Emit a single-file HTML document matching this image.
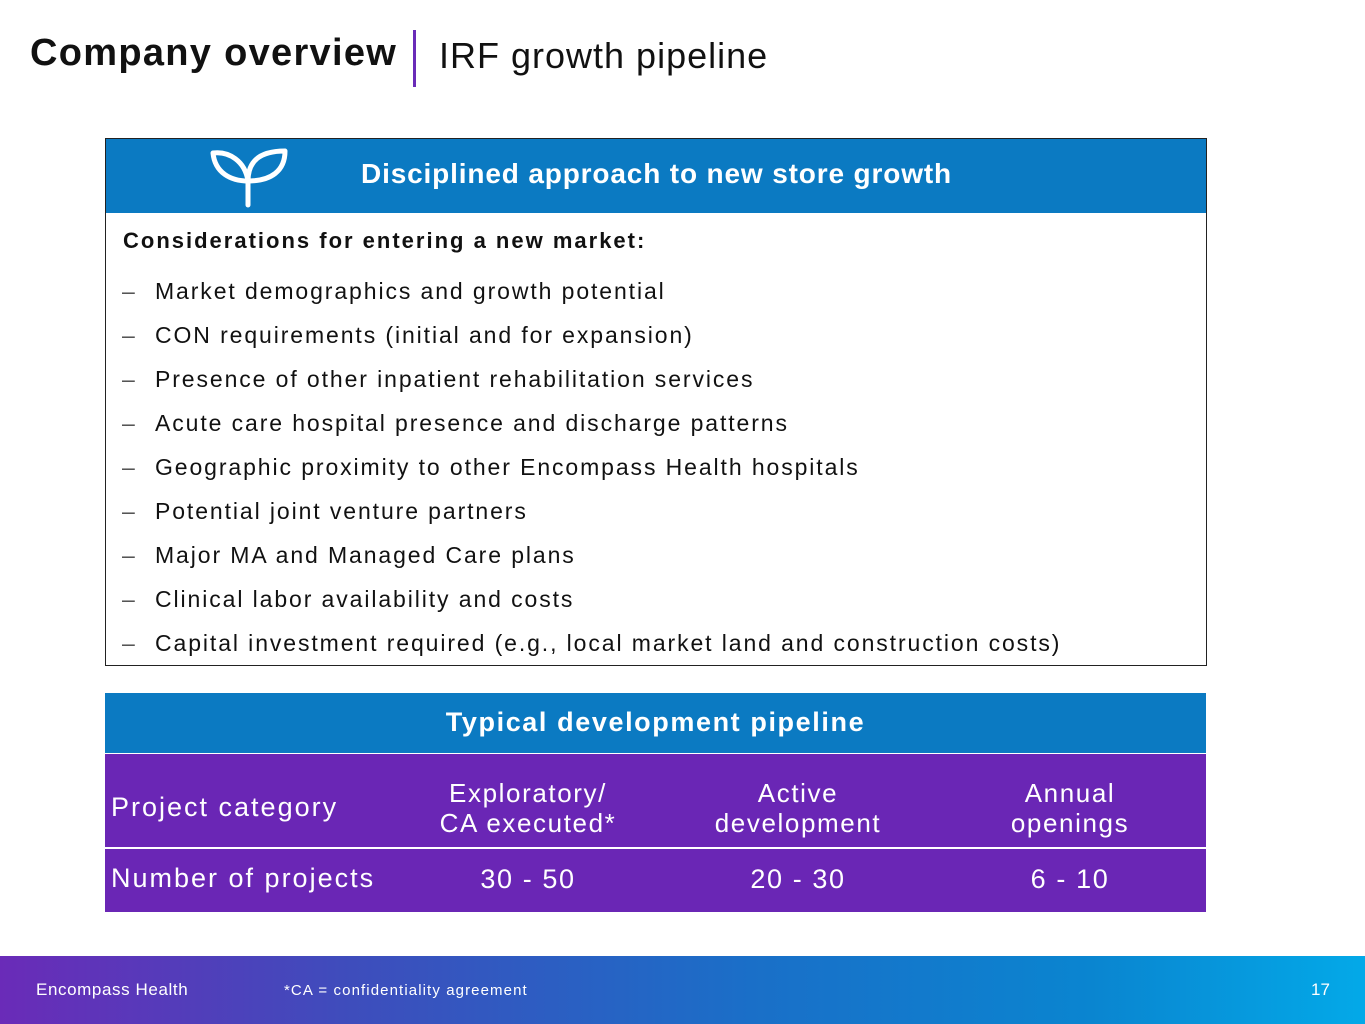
<!DOCTYPE html>
<html><head><meta charset="utf-8"><style>
body{margin:0;width:1365px;height:1024px;position:relative;background:#fff;font-family:"Liberation Sans",sans-serif;overflow:hidden}
.a{position:absolute;white-space:nowrap}
.li{position:absolute;left:122px;font-size:23px;color:#111;white-space:nowrap;letter-spacing:1.9px}
.li span{display:inline-block;width:33px;color:#555;letter-spacing:0}
.c{position:absolute;text-align:center;color:#fff;font-size:26px;line-height:30px;letter-spacing:1.6px}
</style></head><body>
<div class="a" style="left:30px;top:32px;font-size:38px;font-weight:bold;color:#111;letter-spacing:1.3px">Company overview</div>
<div class="a" style="left:413px;top:30px;width:3px;height:57px;background:#6a2bb8"></div>
<div class="a" style="left:439px;top:35px;font-size:36px;color:#111;letter-spacing:1px">IRF growth pipeline</div>

<div class="a" style="left:105px;top:138px;width:1100px;height:526px;border:1.5px solid #222"></div>
<div class="a" style="left:106px;top:139px;width:1100px;height:74px;background:#0b7ac2"></div>
<svg class="a" style="left:205px;top:143px" width="90" height="68" viewBox="0 0 90 68">
<g fill="none" stroke="#fff" stroke-width="5" stroke-linecap="round" stroke-linejoin="round">
<path d="M43 62 V38"/>
<path d="M8 10 C24 8 40 18 43 38 C26 38 10 30 8 10"/>
<path d="M43 38 C43 18 55 8 80 8 C80 28 66 38 43 38"/>
</g></svg>
<div class="a" style="left:361px;top:158px;font-size:28px;font-weight:bold;color:#fff;letter-spacing:0.85px">Disciplined approach to new store growth</div>
<div class="a" style="left:123px;top:228px;font-size:22px;font-weight:bold;color:#111;letter-spacing:2px">Considerations for entering a new market:</div>
<div class="li" style="top:278px"><span>–</span>Market demographics and growth potential</div>
<div class="li" style="top:322px"><span>–</span>CON requirements (initial and for expansion)</div>
<div class="li" style="top:366px"><span>–</span>Presence of other inpatient rehabilitation services</div>
<div class="li" style="top:410px"><span>–</span>Acute care hospital presence and discharge patterns</div>
<div class="li" style="top:454px"><span>–</span>Geographic proximity to other Encompass Health hospitals</div>
<div class="li" style="top:498px"><span>–</span>Potential joint venture partners</div>
<div class="li" style="top:542px"><span>–</span>Major MA and Managed Care plans</div>
<div class="li" style="top:586px"><span>–</span>Clinical labor availability and costs</div>
<div class="li" style="top:630px"><span>–</span>Capital investment required (e.g., local market land and construction costs)</div>

<div class="a" style="left:105px;top:693px;width:1101px;height:60px;background:#0b7ac2"></div>
<div class="c" style="left:105px;top:707px;width:1101px;font-weight:bold;font-size:27px">Typical development pipeline</div>
<div class="a" style="left:105px;top:754px;width:1101px;height:93px;background:#6a26b5"></div>
<div class="a" style="left:105px;top:849px;width:1101px;height:63px;background:#6a26b5"></div>
<div class="a" style="left:111px;top:792px;font-size:27px;color:#fff;letter-spacing:2px">Project category</div>
<div class="c" style="left:398px;top:778px;width:260px">Exploratory/<br>CA executed*</div>
<div class="c" style="left:668px;top:778px;width:260px">Active<br>development</div>
<div class="c" style="left:940px;top:778px;width:260px">Annual<br>openings</div>
<div class="a" style="left:111px;top:863px;font-size:27px;color:#fff;letter-spacing:2px">Number of projects</div>
<div class="c" style="left:398px;top:864px;width:260px;font-size:27px">30 - 50</div>
<div class="c" style="left:668px;top:864px;width:260px;font-size:27px">20 - 30</div>
<div class="c" style="left:940px;top:864px;width:260px;font-size:27px">6 - 10</div>

<div class="a" style="left:0;top:956px;width:1365px;height:68px;background:linear-gradient(90deg,#6a2bb8 0%,#3f4cbc 25%,#1a6fc8 55%,#0a85d0 80%,#03a9e8 100%)"></div>
<div class="a" style="left:36px;top:980px;font-size:17px;color:#fff;letter-spacing:0.6px">Encompass Health</div>
<div class="a" style="left:284px;top:982px;font-size:15px;color:#fff;letter-spacing:1.1px">*CA = confidentiality agreement</div>
<div class="a" style="left:1311px;top:980px;font-size:17px;color:#fff">17</div>
</body></html>
